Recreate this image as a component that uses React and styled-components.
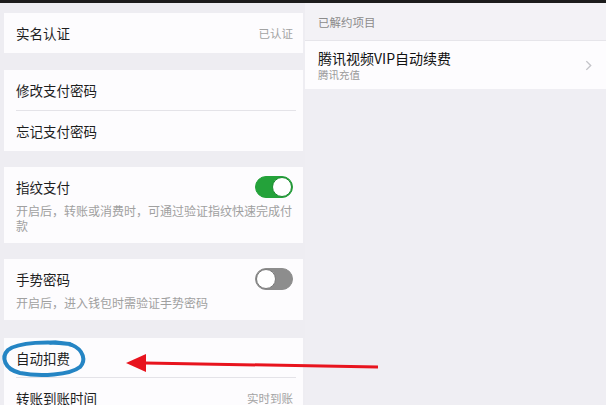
import React from 'react'
import styled, { createGlobalStyle } from 'styled-components'

const GlobalStyle = createGlobalStyle`
html, body {
    margin: 0;
    padding: 0;
    background: #eeedf2;
    font-family: "Noto Sans CJK SC", "Noto Sans", sans-serif;
}
`

export default function App() {
    return (
        <Page>
            <GlobalStyle />
            <TopBar />
            <Columns>
                <LeftPanel>
                    <Gap h={10} />
                    <Group>
                        <Row>
                            <Title>实名认证</Title>
                            <Value>已认证</Value>
                        </Row>
                    </Group>
                    <Gap h={17} />
                    <Group>
                        <Row>
                            <Title>修改支付密码</Title>
                        </Row>
                        <Divider />
                        <Row>
                            <Title>忘记支付密码</Title>
                        </Row>
                    </Group>
                    <Gap h={16} />
                    <Group>
                        <SwitchBlock>
                            <SwitchHead>
                                <Title>指纹支付</Title>
                                <Toggle on />
                            </SwitchHead>
                            <Desc>开启后，转账或消费时，可通过验证指纹快速完成付款</Desc>
                        </SwitchBlock>
                    </Group>
                    <Gap h={16} />
                    <Group>
                        <SwitchBlock>
                            <SwitchHead>
                                <Title>手势密码</Title>
                                <Toggle />
                            </SwitchHead>
                            <Desc>开启后，进入钱包时需验证手势密码</Desc>
                        </SwitchBlock>
                    </Group>
                    <Gap h={18} />
                    <Group>
                        <Row short>
                            <Title>自动扣费</Title>
                        </Row>
                        <Divider />
                        <Row>
                            <Title>转账到账时间</Title>
                            <Value>实时到账</Value>
                        </Row>
                    </Group>
                </LeftPanel>
                <RightPanel>
                    <SectionHeader>已解约项目</SectionHeader>
                    <ItemRow>
                        <ItemText>
                            <ItemTitle>腾讯视频VIP自动续费</ItemTitle>
                            <ItemSub>腾讯充值</ItemSub>
                        </ItemText>
                        <Chevron viewBox="0 0 8 12">
                            <path d="M1.5 1 L6.5 6 L1.5 11" />
                        </Chevron>
                    </ItemRow>
                </RightPanel>
            </Columns>
            <Marks viewBox="0 0 606 405">
                <path
                    d="M70 344 C50 341 18 342 8 350 C1 357 4 369 20 373 C40 377 70 375 80 367 C86 361 84 350 72 345 C66 343 56 342 50 343"
                    fill="none"
                    stroke="#2585c4"
                    strokeWidth="4"
                    strokeLinecap="round"
                />
                <path d="M378 367 L145 363" stroke="#e8141e" strokeWidth="3" />
                <polygon points="126,363 146,354 146,372" fill="#e8141e" />
            </Marks>
        </Page>
    )
}

function Toggle({ on }) {
    return (
        <Track on={on}>
            <Knob on={on} />
        </Track>
    )
}

// Styled Components
const Page = styled.div`
position: relative;
width: 606px;
height: 405px;
overflow: hidden;
background: #eeedf2;
`
const TopBar = styled.div`
height: 3px;
background: #1c1c1c;
`
const Columns = styled.div`
display: flex;
height: 402px;
`
const LeftPanel = styled.div`
width: 299px;
margin-left: 4px;
display: flex;
flex-direction: column;
`
const Gap = styled.div`
height: ${p => p.h}px;
flex-shrink: 0;
`
const Group = styled.div`
background: #fdfcfe;
flex-shrink: 0;
`
const Row = styled.div`
display: flex;
align-items: center;
justify-content: space-between;
height: ${p => (p.short ? 39 : 40)}px;
padding: 0 10px 0 12px;
`
const Title = styled.span`
font-size: 13.5px;
color: #1e1e1e;
`
const Value = styled.span`
font-size: 11.5px;
color: #a3a3a3;
`
const Divider = styled.div`
height: 1px;
margin: 0 7px 0 12px;
background: #e4e3e8;
`
const SwitchBlock = styled.div`
padding: 10px 10px 10px 12px;
`
const SwitchHead = styled.div`
display: flex;
align-items: center;
justify-content: space-between;
height: 20px;
`
const Desc = styled.div`
margin-top: 6px;
font-size: 12px;
line-height: 15px;
color: #a0a0a0;
`
const Track = styled.div`
position: relative;
width: 38px;
height: 22px;
border-radius: 11px;
box-sizing: border-box;
background: ${p => (p.on ? '#24a23a' : '#8d8d8d')};
border: 1px solid ${p => (p.on ? '#24a23a' : '#8d8d8d')};
`
const Knob = styled.div`
position: absolute;
top: 0;
${p => (p.on ? 'right: 0;' : 'left: 0;')}
width: 20px;
height: 20px;
border-radius: 50%;
background: #ffffff;
box-sizing: border-box;
border: 1px solid ${p => (p.on ? '#1d8a30' : '#7a7a7a')};
`
const RightPanel = styled.div`
flex: 1;
margin-left: 2px;
background: #efeef3;
display: flex;
flex-direction: column;
`
const SectionHeader = styled.div`
height: 37px;
padding: 0 13px;
display: flex;
align-items: center;
font-size: 11.5px;
color: #8b8b8b;
background: #f3f2f6;
border-bottom: 1px solid #e6e5ea;
`
const ItemRow = styled.div`
display: flex;
align-items: center;
justify-content: space-between;
height: 48px;
padding: 0 14px 0 13px;
background: #fdfcfe;
`
const ItemText = styled.div`
display: flex;
flex-direction: column;
gap: 1px;
`
const ItemTitle = styled.span`
font-size: 14px;
line-height: 18px;
color: #111111;
`
const ItemSub = styled.span`
font-size: 10.5px;
line-height: 13px;
color: #9a9a9a;
`
const Chevron = styled.svg`
width: 7px;
height: 11px;
fill: none;
stroke: #c4c4c9;
stroke-width: 1.6;
`
const Marks = styled.svg`
position: absolute;
left: 0;
top: 0;
width: 606px;
height: 405px;
pointer-events: none;
`
